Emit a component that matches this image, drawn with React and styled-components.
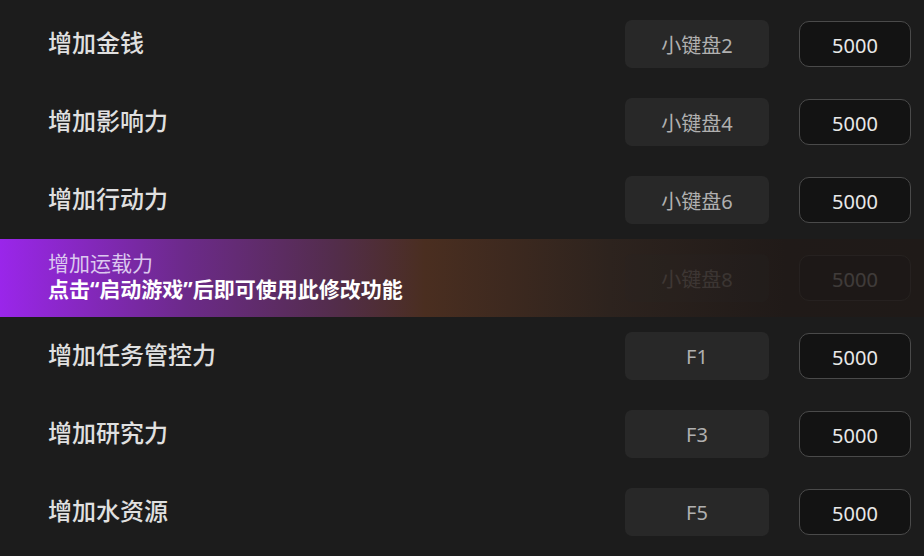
import React from "react";
import styled, { createGlobalStyle } from "styled-components";

const GlobalStyle = createGlobalStyle`
  html, body {
    margin: 0;
    padding: 0;
    background: #1c1c1c;
  }
  body {
    font-family: "Noto Sans", "Noto Sans CJK SC", sans-serif;
  }
`;

const rows = [
  { label: "增加金钱", key: "小键盘2", value: "5000" },
  { label: "增加影响力", key: "小键盘4", value: "5000" },
  { label: "增加行动力", key: "小键盘6", value: "5000" },
  { label: "增加运载力", key: "小键盘8", value: "5000", locked: true },
  { label: "增加任务管控力", key: "F1", value: "5000" },
  { label: "增加研究力", key: "F3", value: "5000" },
  { label: "增加水资源", key: "F5", value: "5000" },
];

const Page = styled.div`
  width: 924px;
  height: 556px;
  overflow: hidden;
  background: #1c1c1c;
  padding-top: 5px;
  box-sizing: border-box;
`;

const Row = styled.div`
  height: 78px;
  display: flex;
  align-items: center;
  padding: 0 13px 0 48px;
  box-sizing: border-box;
  background: ${p => p.$locked
    ? "linear-gradient(90deg, #9a26ea 0%, #6c2a8a 20%, #532d4c 36%, #4a2e20 46%, #2d231e 66%, #201a18 85%, #1f1a18 100%)"
    : "transparent"};
`;

const LabelBlock = styled.div`
  flex: 1;
  display: flex;
  flex-direction: column;
  justify-content: center;
`;

const Label = styled.div`
  font-family: "Noto Sans CJK SC", sans-serif;
  font-weight: ${p => p.$locked ? 400 : 500};
  font-size: ${p => p.$locked ? "21px" : "24px"};
  line-height: ${p => p.$locked ? "27px" : "30px"};
  color: ${p => p.$locked ? "#dcc8ef" : "#e0e0e0"};
  margin-top: ${p => p.$locked ? "-4px" : "-5px"};
`;

const Hint = styled.div`
  font-family: "Noto Sans", "Noto Sans CJK SC", sans-serif;
  font-weight: 700;
  font-size: 21px;
  line-height: 27px;
  color: #ffffff;
`;

const Controls = styled.div`
  display: flex;
  align-items: center;
  gap: 30px;
  opacity: ${p => p.$locked ? 0.16 : 1};
`;

const KeyBox = styled.div`
  width: 144px;
  height: 48px;
  border-radius: 7px;
  background: #282828;
  color: #b0b0b0;
  display: flex;
  align-items: center;
  justify-content: center;
  font-family: "Noto Sans", "Noto Sans CJK SC", sans-serif;
  font-size: 20px;
`;

const ValueBox = styled.div`
  width: 112px;
  height: 46px;
  box-sizing: border-box;
  border-radius: 10px;
  border: 1.5px solid #4a4a4a;
  background: #131313;
  color: #e8e8e8;
  display: flex;
  align-items: center;
  justify-content: center;
  font-family: "Noto Sans", sans-serif;
  font-size: 20px;
  padding-top: 2px;
`;

const App = () => {
  return (
    <Page>
      <GlobalStyle />
      {rows.map(r => (
        <Row key={r.label} $locked={r.locked}>
          <LabelBlock>
            <Label $locked={r.locked}>{r.label}</Label>
            {r.locked && <Hint>点击“启动游戏”后即可使用此修改功能</Hint>}
          </LabelBlock>
          <Controls $locked={r.locked}>
            <KeyBox>{r.key}</KeyBox>
            <ValueBox>{r.value}</ValueBox>
          </Controls>
        </Row>
      ))}
    </Page>
  );
};

export default App;
